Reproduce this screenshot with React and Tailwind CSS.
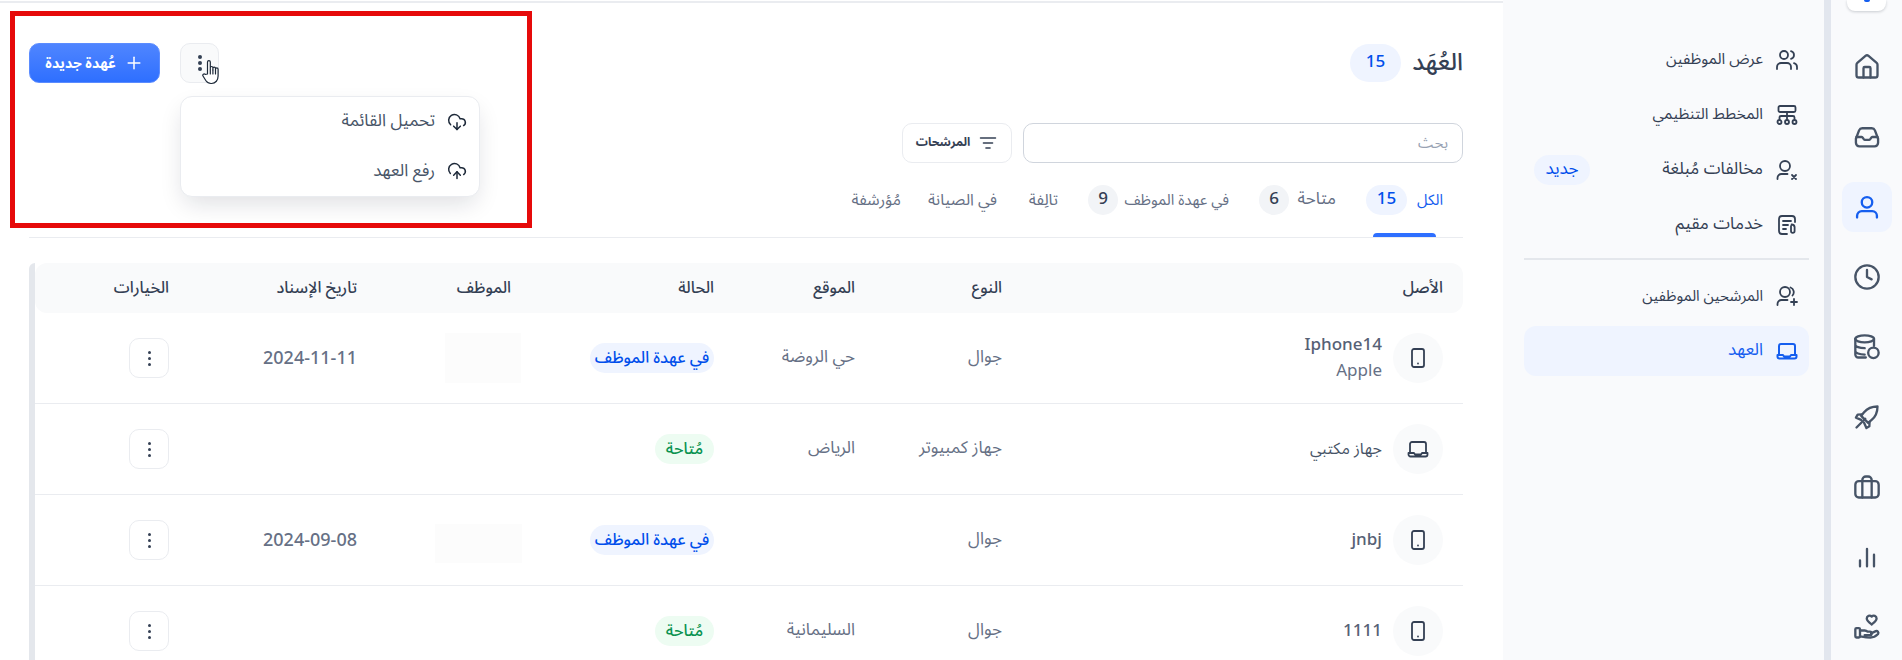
import React from "react";
import { Clock, House, Plus, Users, CloudDownload, CloudUpload } from "lucide-react";

const S = ({ className = "", children, sw = 2, size = 24 }) => (
  <svg viewBox="0 0 24 24" width={size} height={size} fill="none" stroke="currentColor" strokeWidth={sw} strokeLinecap="round" strokeLinejoin="round" className={className}>
    {children}
  </svg>
);
const Phone = () => (
  <S size={24} sw={1.8}><rect x="6" y="3" width="12" height="18" rx="2" /><path d="M12 17.5h.01" /></S>
);
const Laptop = ({ sw = 1.8, size = 24 }) => (
  <S size={size} sw={sw}><path d="M4 16V7a2 2 0 0 1 2-2h12a2 2 0 0 1 2 2v9" /><path d="M2.5 16h5.5l1 1.5h6l1-1.5h5.5v1.5a2 2 0 0 1-2 2h-15a2 2 0 0 1-2-2z" /></S>
);
const Org = () => (
  <S sw={1.8}><rect x="3.5" y="3" width="17" height="6" rx="1.5" /><path d="M12 9v7M4.5 16v-1.5a1.5 1.5 0 0 1 1.5-1.5h12a1.5 1.5 0 0 1 1.5 1.5V16" /><circle cx="4.5" cy="19" r="2" /><circle cx="12" cy="19" r="2" /><circle cx="19.5" cy="19" r="2" /></S>
);
const UserX = () => (
  <S sw={1.8}><circle cx="10" cy="8" r="5" /><path d="M2.5 21v-1a4 4 0 0 1 4-4h6" /><path d="m17 17 4 4M21 17l-4 4" /></S>
);
const UserP = () => (
  <S sw={1.8}><circle cx="10" cy="8" r="5" /><path d="M2.5 21v-1a4 4 0 0 1 4-4h6M15.5 3.5a5 5 0 0 1 2 8" /><path d="M19 15v6M16 18h6" /></S>
);
const Doc = () => (
  <S sw={1.8}><path d="M20 9V6a3 3 0 0 0-3-3H7a3 3 0 0 0-3 3v12a3 3 0 0 0 3 3h5" /><path d="M8 8h8M8 12h5M8 16h3" /><path d="M16 13v5a1.8 1.8 0 0 0 3.6 0v-4a3 3 0 0 0-3-2.5" /></S>
);
const Inbox = () => (
  <S size={28}><path d="M2.5 13.5 5.2 6.3A3 3 0 0 1 8 4.5h8a3 3 0 0 1 2.8 1.8l2.7 7.2V17a3 3 0 0 1-3 3h-13a3 3 0 0 1-3-3z" /><path d="M3 12h4.5c1 0 1.5 2.5 2.5 2.5h4c1 0 1.5-2.5 2.5-2.5H21" /></S>
);
const UserIcon = () => (
  <S size={28}><circle cx="12" cy="8" r="4.5" /><path d="M3.5 21v-1.5a4 4 0 0 1 4-4h9a4 4 0 0 1 4 4V21" /></S>
);
const Coins = () => (
  <S size={28}><ellipse cx="10" cy="5" rx="8" ry="3" /><path d="M2 5v13.5A2.5 2.5 0 0 0 4.5 21H11M18 5v6M2 10c0 1.6 3.5 3 8 3M2 15.5c0 1.6 3.5 3 8 3" /><circle cx="17.5" cy="17" r="4.5" /></S>
);
const Rocket = () => (
  <S size={28}>
    <path d="M21 3c-5 0-9 2-11.5 5L7 11l6 6 3-2.5C19 12 21 8 21 3z" />
    <path d="M7.8 9.8 4 10l-1.5 2.5L7 14.5" />
    <path d="m14.2 16.2-.2 3.8-2.5 1.5-2-4.5" />
    <path d="m3 21 7.5-7.5" />
  </S>
);
const HandHeart = () => (
  <S size={28}>
    <path d="M16 3c-1.6-1.4-4.2-.5-4.2 1.8 0 2.1 2.4 3.7 4.2 5 1.8-1.3 4.2-2.9 4.2-5C20.2 2.500 17.600 1.600 16 3z" />
    <rect x="2" y="13" width="4" height="8" rx="1" />
    <path d="M6 15h4c1 0 2 .5 2.500 1h2a1.500 1.500 0 0 1 0 3H10" />
    <path d="m15.500 17.500 4-2a1.700 1.700 0 0 1 2 2.500c-1.500 1.500-4 3-6.500 3-3 0-6-.5-9-1" />
  </S>
);
const Brief = () => (
  <S size={28}><rect x="2" y="7" width="20" height="14" rx="3" /><path d="M8 21V6a3 3 0 0 1 3-3h2a3 3 0 0 1 3 3v15" /></S>
);
const Bars = () => (
  <S size={28}><path d="M6 20v-5M12 20V5M18 20V10" /></S>
);
const Filter = () => (
  <S size={20} sw={1.8}><path d="M3 6h18M6.500 12h11M9.500 18h5" /></S>
);
const HeadDots = () => (
  <span className="flex flex-col gap-[2px]">
    <i className="block h-[4px] w-[4px] rounded-full bg-[#344054]" />
    <i className="block h-[4px] w-[4px] rounded-full bg-[#344054]" />
    <i className="block h-[4px] w-[4px] rounded-full bg-[#344054]" />
  </span>
);
const RowDots = () => (
  <span className="flex flex-col gap-[3px]">
    <i className="block h-[3px] w-[3px] rounded-full bg-[#344054]" />
    <i className="block h-[3px] w-[3px] rounded-full bg-[#344054]" />
    <i className="block h-[3px] w-[3px] rounded-full bg-[#344054]" />
  </span>
);

const rail = [
  [<House size={28} strokeWidth={2} />],
  [<Inbox />],
  [<UserIcon />, true],
  [<Clock size={28} strokeWidth={2} />],
  [<Coins />],
  [<Rocket />],
  [<Brief />],
  [<Bars />],
  [<HandHeart />],
];

const Side = ({ icon, text, active, badge, size = "text-[16px]" }) => (
  <div className={`flex h-[50px] items-center gap-3 rounded-xl px-[10px] ${active ? "bg-[#eff4ff] text-[#155eef]" : "text-[#344054]"}`}>
    {icon}
    <span className={`whitespace-nowrap ${size}`}>{text}</span>
    {badge && <span className="mr-auto flex h-[30px] w-[56px] items-center justify-center rounded-full bg-[#eff4ff] text-[17px] text-[#004eeb]">{badge}</span>}
  </div>
);

const Tab = ({ label, n, active, w, size = "text-[16px]" }) => (
  <div className={`relative flex h-[52px] items-start gap-[7px] ${active ? "text-[#155eef]" : "text-[#667085]"}`}>
    <span className={`flex h-[30px] items-center whitespace-nowrap ${w} ${size}`}>{label}</span>
    {n && (
      <span className={`flex h-[30px] items-center justify-center rounded-full text-[17px] font-medium ${active ? "w-[41px] bg-[#eff4ff] text-[#004eeb]" : "w-[30px] bg-[#f2f4f7] text-[#344054]"}`}>{n}</span>
    )}
    {active && <span className="absolute inset-x-[7px] bottom-0 h-[4px] rounded-t bg-[#2e6fff]" />}
  </div>
);

const Pill = ({ kind }) =>
  kind === "busy" ? (
    <span className="flex h-[30px] w-[124px] items-center justify-center rounded-full bg-[#eff4ff] text-[16px] font-medium text-[#004eeb]">في عهدة الموظف</span>
  ) : (
    <span className="flex h-[30px] w-[59px] items-center justify-center rounded-full bg-[#edfcf2] text-[16px] font-medium text-[#099250]">مُتاحة</span>
  );

const cols = "grid grid-cols-[441px_147px_141px_203px_154px_188px_154px]";

const rows = [
  { icon: <Phone />, name: "Iphone14", sub: "Apple", type: "جوال", loc: "حي الروضة", st: "busy", date: "2024-11-11", blur: "h-[50px] w-[76px] mr-[10px]", latin: true },
  { icon: <Laptop />, name: "جهاز مكتبي", type: "جهاز كمبيوتر", loc: "الرياض", st: "free" },
  { icon: <Phone />, name: "jnbj", type: "جوال", loc: "", st: "busy", date: "2024-09-08", blur: "h-[39px] w-[87px] mr-[9px] mt-[6px]", latin: true },
  { icon: <Phone />, name: "1111", type: "جوال", loc: "السليمانية", st: "free", latin: true },
];

export default function App() {
  return (
    <div dir="ltr" className="flex h-[660px] w-[1902px] overflow-hidden bg-white" style={{ fontFamily: '"Noto Sans Arabic","Noto Sans","DejaVu Sans",sans-serif' }}>
      <main className="relative w-[1503px] shrink-0">
        <div className="mt-px h-[2px] bg-[#eaecf0]" />
        <div className="pl-[29px] pr-[40px] pt-[40px]">
          <div className="flex h-[40px] items-center justify-between">
            <div className="flex items-center gap-[20px]">
              <button className="flex h-[40px] w-[131px] items-center justify-center gap-2 rounded-[10px] border border-[#5b8cff] bg-gradient-to-b from-[#4f85ff] to-[#2e6fff] text-[14px] font-bold text-white">
                <span dir="rtl" className="whitespace-nowrap">عُهدة جديدة</span>
                <Plus size={20} strokeWidth={1.8} />
              </button>
              <div className="relative">
                <button className="flex h-[40px] w-[39px] items-center justify-center rounded-[10px] border border-[#eaecf0] bg-[#f9fafb]">
                  <HeadDots />
                </button>
                <div dir="rtl" className="absolute left-0 top-[53px] z-10 flex h-[101px] w-[300px] flex-col rounded-xl border border-[#eaecf0] bg-white pr-[12px] text-[17px] text-[#475467] shadow-[0_10px_24px_-4px_rgba(16,24,40,0.14)]">
                  <div className="flex h-[50px] items-center gap-[12px]">
                    <span className="text-[#1d2939]"><CloudDownload size={20} strokeWidth={1.8} /></span>
                    <span>تحميل القائمة</span>
                  </div>
                  <div className="flex h-[50px] items-center gap-[12px]">
                    <span className="text-[#1d2939]"><CloudUpload size={20} strokeWidth={1.8} /></span>
                    <span>رفع العهد</span>
                  </div>
                </div>
                <svg viewBox="0 0 18 26" width="18" height="26" className="absolute left-[22px] top-[16px] z-20" fill="#fff" stroke="#1d2939" strokeWidth="1.2" strokeLinecap="round" strokeLinejoin="round">
                  <path d="M5.500 15V3a1.400 1.400 0 0 1 2.800 0v7.500V8.800a1.300 1.300 0 0 1 2.600 0v2V9.500a1.300 1.300 0 0 1 2.600 0v1.500-.8a1.300 1.300 0 0 1 2.600 0V17c0 4-2.500 7.500-6.500 7.500H9c-2.500 0-4-1.200-5.200-3L1 17a1.400 1.400 0 0 1 2.200-1.700z" />
                  <path d="M8.300 11v4M10.900 11v4M13.500 11v4" />
                </svg>
              </div>
            </div>
            <div dir="rtl" className="flex items-center gap-[10px]">
              <h1 className="w-[52px] whitespace-nowrap text-[24px] font-medium text-[#344054]">العُهَد</h1>
              <span className="flex h-[38px] w-[51px] items-center justify-center rounded-full bg-[#eff4ff] text-[17px] font-medium text-[#004eeb]">15</span>
            </div>
          </div>

          <div dir="rtl" className="mt-[40px] flex gap-[11px]">
            <div className="flex h-[40px] w-[440px] items-center rounded-[10px] border border-[#d0d5dd] px-[14px] text-[15px] text-[#98a2b3]">بحث</div>
            <button className="flex h-[40px] w-[110px] items-center justify-center gap-2 rounded-[10px] border border-[#eaecf0] text-[12px] font-bold text-[#344054]">
              <Filter />
              <span>المرشحات</span>
            </button>
          </div>

          <div dir="rtl" className="mt-[22px] flex gap-[30px] border-b border-[#eaecf0] pr-[20px]">
            <Tab label="الكل" n="15" active w="w-[29px]" size="text-[15px]" />
            <Tab label="متاحة" n="6" w="w-[40px]" size="text-[17px]" />
            <Tab label="في عهدة الموظف" n="9" w="w-[104px]" size="text-[15px]" />
            <Tab label="تالِفة" w="w-[31px]" />
            <Tab label="في الصيانة" w="w-[66px]" />
            <Tab label="مُؤرشفة" w="w-[52px]" />
          </div>
        </div>

        <div dir="rtl" className="ml-[29px] mr-[40px] mt-[25px] rounded-tl-md border-l-[6px] border-[#e4e7ec]">
          <div className={`${cols} h-[50px] items-center rounded-xl bg-[#f9fafb] text-[16px] font-medium text-[#344054]`}>
            {["الأصل", "النوع", "الموقع", "الحالة", "الموظف", "تاريخ الإسناد", "الخيارات"].map((h) => (
              <div key={h} className="pr-[20px]">{h}</div>
            ))}
          </div>
          {rows.map((r, i) => (
            <div key={i} className={`${cols} h-[91px] items-center border-b border-[#eaecf0] text-[17px] text-[#667085]`}>
              <div className="flex items-center gap-[11px] pr-[20px]">
                <span className="flex h-[50px] w-[50px] items-center justify-center rounded-full bg-[#f9fafb] text-[#344054]">{r.icon}</span>
                <div className="flex flex-col leading-[26px]">
                  <span className={r.latin ? "text-[17px] font-medium text-[#566175]" : "text-[16px] text-[#475467]"}>{r.name}</span>
                  {r.sub && <span className="text-[17px] text-[#667085]">{r.sub}</span>}
                </div>
              </div>
              <div className="pr-[20px]">{r.type}</div>
              <div className="pr-[20px]">{r.loc}</div>
              <div className="pr-[20px]"><Pill kind={r.st} /></div>
              <div>{r.blur && <div className={`bg-[#fcfcfc] ${r.blur}`} />}</div>
              <div className="pr-[20px] text-[18px] font-medium">{r.date}</div>
              <div className="pr-[20px]">
                <button className="flex h-[40px] w-[40px] items-center justify-center rounded-[10px] border border-[#eaecf0] bg-white">
                  <RowDots />
                </button>
              </div>
            </div>
          ))}
        </div>

        <div className="pointer-events-none absolute left-[10px] top-[11px] z-30 h-[217px] w-[522px] border-[5px] border-[#e60a0a]" />
      </main>

      <aside dir="rtl" className="w-[321px] shrink-0 bg-[#f9fafc] pl-[21px] pr-[15px] pt-[35px]">
        <div className="flex flex-col gap-[5px]">
          <Side icon={<Users size={24} strokeWidth={1.8} />} text="عرض الموظفين" size="text-[15.5px]" />
          <Side icon={<Org />} text="المخطط التنظيمي" size="text-[15.5px]" />
          <Side icon={<UserX />} text="مخالفات مُبلغة" badge="جديد" size="text-[17px]" />
          <Side icon={<Doc />} text="خدمات مقيم" size="text-[17px]" />
        </div>
        <div className="mb-[11px] mt-[8px] h-[2px] bg-[#e4e7ec]" />
        <div className="flex flex-col gap-[5px]">
          <Side icon={<UserP />} text="المرشحين الموظفين" size="text-[15px]" />
          <Side icon={<Laptop sw={2} />} text="العهد" active size="text-[17px]" />
        </div>
      </aside>
      <div className="w-[7px] shrink-0 bg-[#e2e6ee]" />
      <nav className="flex w-[71px] shrink-0 flex-col items-center gap-[20px] bg-[#f9fafc]">
        <div className="-mb-[20px] flex h-[11px] w-[39px] shrink-0 items-start justify-center overflow-hidden rounded-b-lg bg-white shadow-[0_1px_3px_rgba(16,24,40,0.2)]">
          <span className="h-[2px] w-[6px] rounded-b bg-[#155eef]" />
        </div>
        <div className="h-[11px] shrink-0" />
        {rail.map(([ic, active], i) => (
          <div key={i} className={`flex h-[50px] w-[50px] shrink-0 items-center justify-center rounded-xl ${active ? "bg-[#eff4ff] text-[#155eef]" : "text-[#475467]"}`}>{ic}</div>
        ))}
      </nav>
    </div>
  );
}
